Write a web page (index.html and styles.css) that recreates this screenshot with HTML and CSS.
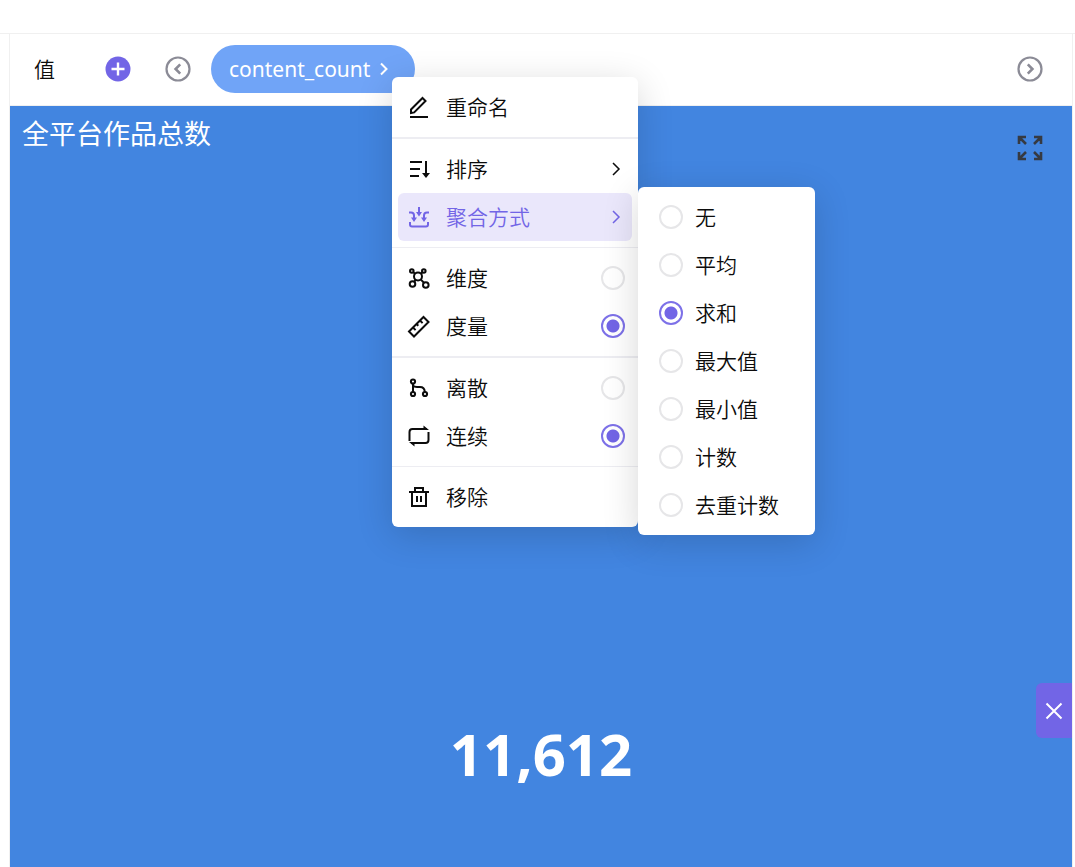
FILE: index.html
```html
<!DOCTYPE html>
<html lang="zh-CN">
<head>
    <meta charset="UTF-8">
    <title>全平台作品总数</title>
    <link rel="stylesheet" href="styles.css">
</head>
<body>
    <div class="topbar"></div>
    <main class="panel">
        <div class="shelf">
            <span class="shelf-label">值</span>
            <button type="button" class="icon-btn add" aria-label="添加">
                <svg width="26" height="26" viewBox="0 0 26 26"><circle cx="13" cy="13" r="12.5" fill="#7265e6"/><path d="M13 6.5v13M6.5 13h13" stroke="#fff" stroke-width="2.4" fill="none"/></svg>
            </button>
            <button type="button" class="icon-btn back" aria-label="向左">
                <svg width="26" height="26" viewBox="0 0 26 26" fill="none" stroke="#8b8b96"><circle cx="13" cy="13" r="11.5" stroke-width="2.2"/><path d="M15.2 8.4L10.6 13l4.6 4.6" stroke-width="2.6"/></svg>
            </button>
            <div class="field">
                <button type="button" class="pill">content_count
                    <svg width="10" height="14" viewBox="0 0 10 14" fill="none" stroke="#fff" stroke-width="2"><path d="M2 1.5L7.5 7 2 12.5"/></svg>
                </button>

                <div class="menu">
                    <button type="button" class="item">
                        <svg class="ico" viewBox="0 0 24 24"><path d="M3 22h18"/><path d="M4 14.5L15.5 3l3 3L7.2 17.4 4 18z"/></svg>
                        <span>重命名</span>
                    </button>
                    <hr class="thick">
                    <button type="button" class="item">
                        <svg class="ico" viewBox="0 0 24 24"><path d="M3 5h12M3 12h10M3 19h9M19 4v13"/><path class="solid" d="M15 16h8l-4 5z"/></svg>
                        <span>排序</span>
                        <svg class="arrow" viewBox="0 0 18 18"><path d="M6 3l6 6-6 6"/></svg>
                    </button>
                    <div class="sub-wrap">
                        <button type="button" class="item active">
                            <svg class="ico" viewBox="0 0 24 24"><path d="M3 17v2.5q0 2 2 2h14q2 0 2-2V17M12 2v7M2 7.5h2q3 0 3 3v4M22 7.5h-2q-3 0-3 3v4"/><path class="solid" d="M9 7h6l-3 4.500zM4 12.500h6l-3 4.500zM14 12.500h6l-3 4.500z"/></svg>
                            <span>聚合方式</span>
                            <svg class="arrow" viewBox="0 0 18 18"><path d="M6 3l6 6-6 6"/></svg>
                        </button>
                        <div class="menu submenu">
                            <label class="item"><input type="radio" name="agg"><span>无</span></label>
                            <label class="item"><input type="radio" name="agg"><span>平均</span></label>
                            <label class="item"><input type="radio" name="agg" checked><span>求和</span></label>
                            <label class="item"><input type="radio" name="agg"><span>最大值</span></label>
                            <label class="item"><input type="radio" name="agg"><span>最小值</span></label>
                            <label class="item"><input type="radio" name="agg"><span>计数</span></label>
                            <label class="item"><input type="radio" name="agg"><span>去重计数</span></label>
                        </div>
                    </div>
                    <hr>
                    <label class="item">
                        <svg class="ico" viewBox="0 0 24 24"><circle cx="11" cy="10.5" r="4"/><circle cx="4.8" cy="5" r="1.8"/><circle cx="16.8" cy="5" r="1.8"/><circle cx="5.5" cy="18" r="2.8"/><circle cx="18.8" cy="19" r="2.8"/><path d="M6.2 6.2l2 1.6M15.5 6.2L13.8 7.800M7.4 15.8l1.200-2.200M13.7 13.4l3.200 3.400"/></svg>
                        <span>维度</span>
                        <input type="radio" name="role">
                    </label>
                    <label class="item">
                        <svg class="ico" viewBox="0 0 24 24"><path d="M2 17.5L16.5 3l5 5L7 22.5z"/><path d="M6 13.5l2.6 2.6M9.5 10l1.8 1.8M13 6.5l2.6 2.6"/></svg>
                        <span>度量</span>
                        <input type="radio" name="role" checked>
                    </label>
                    <hr class="thick">
                    <label class="item">
                        <svg class="ico" viewBox="0 0 24 24"><circle cx="6" cy="5.5" r="2.1"/><circle cx="6" cy="18" r="2.1"/><circle cx="18" cy="18" r="2.1"/><path d="M6 7.6v8.3M6 9.5q1 1.5 4 1.5h3q4.5 0 4.8 4.9"/></svg>
                        <span>离散</span>
                        <input type="radio" name="type">
                    </label>
                    <label class="item">
                        <svg class="ico" viewBox="0 0 24 24"><path d="M2.500 17V8q0-3 3-3H20M21.500 8v8q0 3-3 3H4"/><path class="solid" d="M16.500 1.500l5.500 4.500h-5.500zM7.500 22.500L2 18h5.500z"/></svg>
                        <span>连续</span>
                        <input type="radio" name="type" checked>
                    </label>
                    <hr>
                    <button type="button" class="item">
                        <svg class="ico" viewBox="0 0 24 24"><path d="M2 7h20M5 7v14h14V7M8 7V3h8v4M10 11v6M14 11v6"/></svg>
                        <span>移除</span>
                    </button>
                </div>
            </div>
            <button type="button" class="icon-btn next" aria-label="向右">
                <svg width="26" height="26" viewBox="0 0 26 26" fill="none" stroke="#8b8b96"><circle cx="13" cy="13" r="11.5" stroke-width="2.2"/><path d="M10.8 8.4l4.6 4.6-4.6 4.6" stroke-width="2.6"/></svg>
            </button>
        </div>

        <section class="chart">
            <div class="chart-head">
                <h1>全平台作品总数</h1>
                <button type="button" class="icon-btn full" aria-label="全屏">
                    <svg width="26" height="26" viewBox="0 0 26 26" fill="none" stroke="#363a42" stroke-width="2.6"><path d="M2 9V2h7M2 2l7 7M17 2h7v7M24 2l-7 7M2 17v7h7M2 24l7-7M24 17v7h-7M24 24l-7-7"/></svg>
                </button>
            </div>
            <p class="value">11,612</p>
            <button type="button" class="close" aria-label="关闭">
                <svg width="18" height="18" viewBox="0 0 18 18" fill="none" stroke="#fff" stroke-width="2"><path d="M1.5 1.5l15 15M16.5 1.5l-15 15"/></svg>
            </button>
        </section>
    </main>
</body>
</html>
```

FILE: styles.css
```css
*{margin:0;padding:0;box-sizing:border-box;}
body{display:flex;flex-direction:column;min-height:100vh;background:#fff;color:#0c0c0c;font-family:"Noto Sans","Noto Sans CJK SC",sans-serif;font-size:21px;line-height:30px;}
button{border:0;background:none;font:inherit;color:inherit;cursor:pointer;}
svg{display:block;flex:none;}

.topbar{height:34px;border-bottom:1px solid #f0f0f0;}
.panel{flex:1;display:flex;flex-direction:column;margin:0 2px 0 9px;border:solid #f0f0f0;border-width:0 1px;}

.shelf{display:flex;align-items:center;height:72px;padding:0 29px 1px 24px;border-bottom:1px solid #f0f0f0;}
.shelf-label{width:71px;font-weight:350;}
.back{margin-left:34px;}
.field{position:relative;margin-left:20px;}
.next{margin-left:auto;}
.pill{display:flex;align-items:center;gap:9px;height:48px;padding:0 26px 0 18px;border-radius:24px;background:#70a4f7;color:#fff;}

.menu{position:absolute;left:181px;top:32px;z-index:2;width:246px;padding:6px;border-radius:6px;background:#fff;box-shadow:0 8px 36px rgba(0,0,0,.16);}
.menu hr{height:1px;margin:6px -6px;border:0;background:#ededf2;}
.menu hr.thick{height:2px;}
.item{display:flex;align-items:center;gap:15px;width:100%;height:48px;padding:0 7px 0 9px;border-radius:6px;font-weight:350;text-align:left;cursor:pointer;}
.item.active{background:#eae7fb;color:#7265e6;}
.ico{width:24px;height:24px;fill:none;stroke:currentColor;stroke-width:2;}
.ico .solid{fill:currentColor;stroke:none;}
.arrow{width:18px;height:18px;margin-left:auto;fill:none;stroke:currentColor;stroke-width:1.5;}
.item input{appearance:none;flex:none;width:24px;height:24px;margin-left:auto;border:2px solid #e6e6e8;border-radius:50%;background:#fff;}
.item input:checked{border-color:#7d71e8;background:radial-gradient(circle,#7265e6 6px,#fff 7px);}

.sub-wrap{position:relative;}
.submenu{left:240px;top:-6px;width:177px;}
.submenu .item{gap:12px;padding:0 15px;}
.submenu .item input{margin-left:0;}

.chart{position:relative;flex:1;background:#4285e0;color:#fff;}
.chart-head{display:flex;justify-content:space-between;align-items:flex-start;padding:8px 29px 0 12px;}
.chart-head h1{font-size:27px;line-height:40px;font-weight:400;}
.full{margin-top:21px;}
.value{margin-top:553px;font-size:58px;line-height:80px;font-weight:700;text-align:center;}
.close{position:absolute;right:0;top:577px;display:flex;align-items:center;justify-content:center;width:36px;height:55px;border-radius:6px 0 0 6px;background:#7265e6;}
```
